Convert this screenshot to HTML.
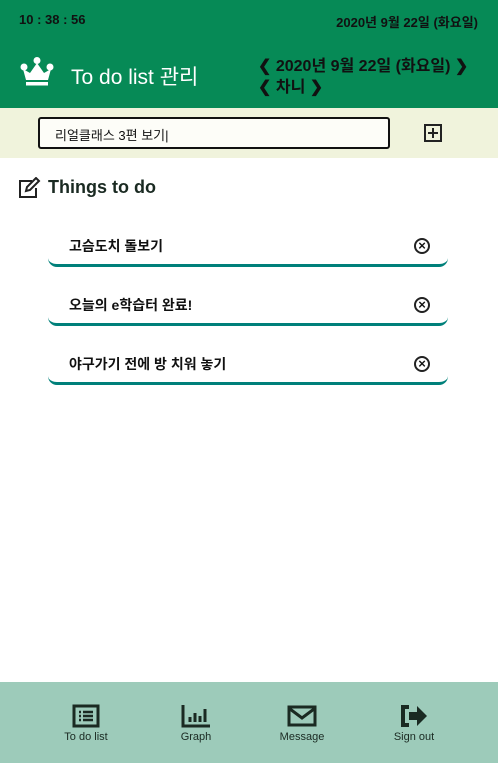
<!DOCTYPE html>
<html><head><meta charset="utf-8"><style>
*{margin:0;padding:0;box-sizing:border-box}
body{width:498px;height:763px;position:relative;background:#fff;font-family:"Liberation Sans","Noto Sans CJK KR",sans-serif;overflow:hidden;color:#111}
.top{position:absolute;left:0;top:0;width:498px;height:108px;background:#068a56}
.st{position:absolute;top:12px;font-size:13px;font-weight:bold;color:#111}
.band{position:absolute;left:0;top:108px;width:498px;height:50px;background:#f0f3dc}
.inp{position:absolute;left:38px;top:117px;width:352px;height:32px;border:2px solid #111;border-radius:3px;background:#fdfdf8;font-size:13px;padding:6px 0 0 15px}
.item{position:absolute;left:48px;width:400px;height:41px;border-bottom:3px solid #00807a;border-radius:0 0 9px 9px;font-size:14px;font-weight:bold}
.item span{position:absolute;left:21px;top:10px}
.x{position:absolute;right:18px;top:12px;width:16px;height:16px;border:2px solid #222;border-radius:50%;font-size:13px;line-height:11px;text-align:center;font-weight:bold}
.foot{position:absolute;left:0;top:682px;width:498px;height:81px;background:#9dcbba}
.fi{position:absolute;top:22px;text-align:center;font-size:11px;color:#1a2a22;width:80px}
.fi svg{display:block;margin:0 auto 3px}
</style></head><body>
<div class="top">
<div class="st" style="left:19px">10 : 38 : 56</div>
<div class="st" style="right:20px">2020년 9월 22일 (화요일)</div>
<svg style="position:absolute;left:20px;top:57px" width="34" height="30" viewBox="0 0 34 30"><circle cx="4" cy="10" r="3.5" fill="#fff"/><circle cx="17" cy="3.5" r="3.5" fill="#fff"/><circle cx="30" cy="10" r="3.5" fill="#fff"/><path d="M3 12 L10 16 L17 6 L24 16 L31 12 L28 23 H6Z" fill="#fff"/><rect x="6" y="25" width="22" height="3.5" fill="#fff"/></svg>
<div style="position:absolute;left:71px;top:61px;font-size:21px;color:#fff">To do list 관리</div>
<div style="position:absolute;left:258px;top:52px;font-size:16px;font-weight:bold">❮ 2020년 9월 22일 (화요일) ❯</div>
<div style="position:absolute;left:258px;top:73px;font-size:16px;font-weight:bold">❮ 차니 ❯</div>
</div>
<div class="band"></div>
<div class="inp">리얼클래스 3편 보기|</div>
<svg style="position:absolute;left:424px;top:124px" width="18" height="18" viewBox="0 0 18 18"><rect x="1" y="1" width="16" height="16" fill="none" stroke="#222" stroke-width="2"/><path d="M9 4v10M4 9h10" stroke="#222" stroke-width="2"/></svg>
<svg style="position:absolute;left:18px;top:177px" width="24" height="22" viewBox="0 0 24 22"><path d="M14 4H2v16h16v-9" fill="none" stroke="#222" stroke-width="2"/><path d="M8 14l1-4 9-9 3 3-9 9z" fill="none" stroke="#222" stroke-width="2"/></svg>
<div style="position:absolute;left:48px;top:177px;font-size:18px;font-weight:bold;color:#1a2a22">Things to do</div>
<div class="item" style="top:226px"><span>고슴도치 돌보기</span><div class="x">×</div></div>
<div class="item" style="top:285px"><span>오늘의 e학습터 완료!</span><div class="x">×</div></div>
<div class="item" style="top:344px"><span>야구가기 전에 방 치워 놓기</span><div class="x">×</div></div>
<div class="foot">
<div class="fi" style="left:46px"><svg width="28" height="24" viewBox="0 0 28 24"><rect x="2" y="2" width="24" height="20" fill="none" stroke="#1a2a22" stroke-width="3"/><path d="M7 8h2M7 12h2M7 16h2M11 8h10M11 12h10M11 16h10" stroke="#1a2a22" stroke-width="2.5"/></svg>To do list</div>
<div class="fi" style="left:156px"><svg width="30" height="24" viewBox="0 0 30 24"><path d="M2 1v21h27" fill="none" stroke="#1a2a22" stroke-width="3"/><path d="M9 13v5M14 9v9M19 12v6M24 5v13" stroke="#1a2a22" stroke-width="3"/></svg>Graph</div>
<div class="fi" style="left:262px"><svg width="30" height="24" viewBox="0 0 30 24"><rect x="2" y="3" width="26" height="18" fill="none" stroke="#1a2a22" stroke-width="3"/><path d="M3 5l12 9 12-9" fill="none" stroke="#1a2a22" stroke-width="3"/></svg>Message</div>
<div class="fi" style="left:374px"><svg width="30" height="24" viewBox="0 0 30 24"><path d="M10 3H4v18h6" fill="none" stroke="#1a2a22" stroke-width="4"/><path d="M10 8h8V2l10 10-10 10v-6h-8z" fill="#1a2a22"/></svg>Sign out</div>
</div>
</body></html>
